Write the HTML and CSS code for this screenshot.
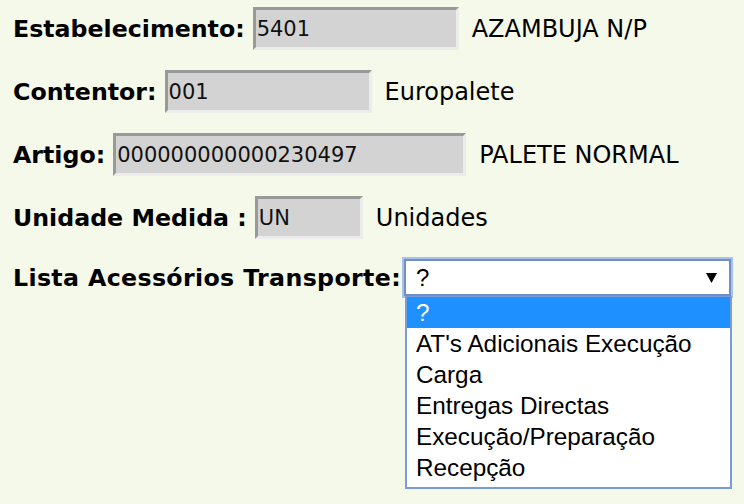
FILE: index.html
```html
<!DOCTYPE html>
<html>
	<head>
	<link rel="stylesheet" href="styles.css">
	</head>
	<body>
		<form class="ficha">
			<div class="linha">
				<label>Estabelecimento:</label>
				<input class="campo estab" value="5401" readonly>
				<span class="desc">AZAMBUJA N/P</span>
			</div>
			<div class="linha">
				<label>Contentor:</label>
				<input class="campo contentor" value="001" readonly>
				<span class="desc">Europalete</span>
			</div>
			<div class="linha">
				<label>Artigo:</label>
				<input class="campo artigo" value="000000000000230497" readonly>
				<span class="desc">PALETE NORMAL</span>
			</div>
			<div class="linha">
				<label>Unidade Medida :</label>
				<input class="campo unidade" value="UN" readonly>
				<span class="desc">Unidades</span>
			</div>
			<div class="linha lista">
				<label>Lista Acessórios Transporte:</label>
				<div class="combo">
					<div class="combo-valor">
						<span>?</span>
						<svg class="seta" width="11" height="10" viewBox="0 0 11 10"><path d="M0 0 H11 L5.5 10 Z" fill="#000"/></svg>
					</div>
					<ul class="combo-lista">
						<li class="ativo">?</li>
						<li>AT's Adicionais Execução</li>
						<li>Carga</li>
						<li>Entregas Directas</li>
						<li>Execução/Preparação</li>
						<li>Recepção</li>
					</ul>
				</div>
			</div>
		</form>
	</body>
</html>
```

FILE: styles.css
```css
	html, body {
		margin: 0px;
		width: 100%;
		height: 100%;
		overflow: hidden;
		background: #f5f9e9;
		font-family: "DejaVu Sans", Verdana, sans-serif;
		color: #000;
	}

	form.ficha {
		display: flex;
		flex-direction: column;
		gap: 20px;
		padding: 7px 0 0 13px;
	}

	div.linha {
		display: flex;
		align-items: center;
		height: 43px;
	}

	div.linha.lista {
		height: 37px;
	}

	div.linha label {
		font-weight: bold;
		font-size: 23.7px;
		margin-right: 8px;
		white-space: nowrap;
	}

	div.linha.lista label {
		letter-spacing: 0.35px;
		margin-right: 3px;
	}

	input.campo {
		box-sizing: border-box;
		height: 43px;
		margin: 0;
		padding: 0 0 0 1px;
		background: #d3d3d3;
		border-style: solid;
		border-width: 3px;
		border-color: #999 #ececec #ececec #999;
		font-family: inherit;
		font-size: 21px;
		color: #111;
		outline: none;
	}

	input.estab { width: 206px; }
	input.contentor { width: 207px; }
	input.artigo { width: 353px; }
	input.unidade { width: 108px; }

	span.desc {
		font-size: 24px;
		margin-left: 13px;
		white-space: nowrap;
	}

	div.combo {
		position: relative;
	}

	div.combo-valor {
		box-sizing: border-box;
		width: 327px;
		height: 37px;
		display: flex;
		align-items: center;
		justify-content: space-between;
		padding: 0 12px 0 10px;
		background: #fff;
		border: 2px solid #6f8fc9;
		outline: 2px solid #a9c1ea;
		font-family: "Liberation Sans", Arial, sans-serif;
		font-size: 24px;
	}

	ul.combo-lista {
		position: absolute;
		top: 37px;
		left: 1px;
		box-sizing: border-box;
		width: 327px;
		margin: 0;
		padding: 0 0 4px 0;
		list-style: none;
		background: #fff;
		border: 2px solid #7b9bd4;
		border-top-width: 1px;
		font-family: "Liberation Sans", Arial, sans-serif;
		font-size: 24.3px;
	}

	ul.combo-lista li {
		height: 31px;
		line-height: 31px;
		padding-left: 9px;
		white-space: nowrap;
	}

	ul.combo-lista li.ativo {
		background: #1e90ff;
		color: #fff;
	}
```
